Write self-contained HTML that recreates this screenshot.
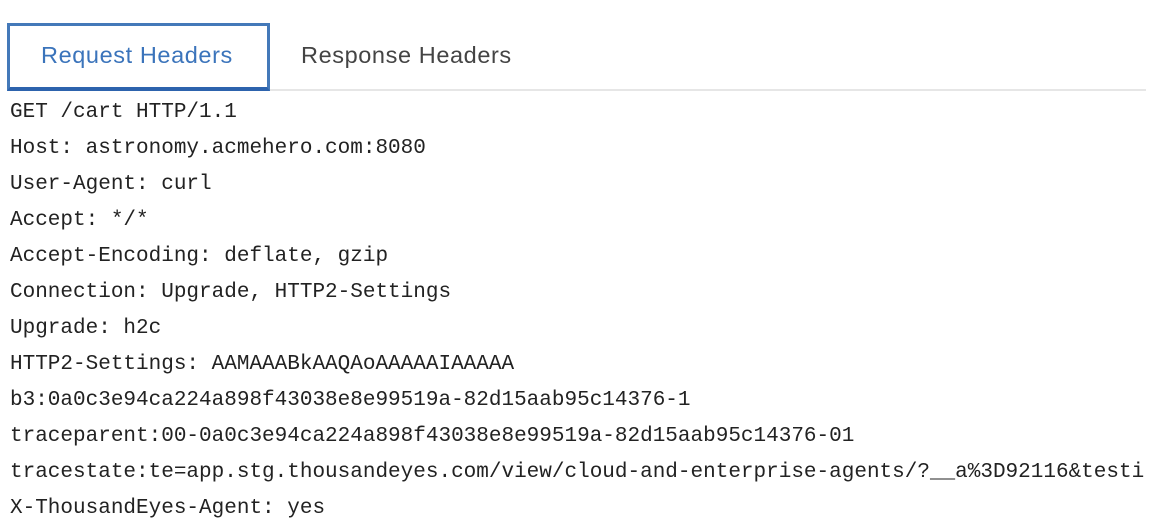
<!DOCTYPE html>
<html><head><meta charset="utf-8"><style>
body{margin:0;background:#fff;width:1168px;height:522px;overflow:hidden;position:relative;font-family:"Liberation Sans",sans-serif}
.line{position:absolute;left:10px;right:22px;top:89px;height:2px;background:#e6e6e6}
.tab{position:absolute;left:7px;top:23px;width:257px;height:61px;border:3px solid #4479b9;border-bottom:4px solid #2d63ad;background:#fff}
.t{position:absolute;top:41px;font-size:23.5px;line-height:28px;letter-spacing:0.6px}
.pre{position:absolute;left:10px;top:95px;font-family:"Liberation Mono",monospace;font-size:21px;line-height:36px;color:#222;white-space:pre;margin:0;width:1140px;overflow:hidden}
</style></head><body>
<div class="line"></div>
<div class="tab"></div>
<div class="t" style="left:41px;color:#3b74bb">Request Headers</div>
<div class="t" style="left:301px;color:#444">Response Headers</div>
<pre class="pre">GET /cart HTTP/1.1
Host: astronomy.acmehero.com:8080
User-Agent: curl
Accept: */*
Accept-Encoding: deflate, gzip
Connection: Upgrade, HTTP2-Settings
Upgrade: h2c
HTTP2-Settings: AAMAAABkAAQAoAAAAAIAAAAA
b3:0a0c3e94ca224a898f43038e8e99519a-82d15aab95c14376-1
traceparent:00-0a0c3e94ca224a898f43038e8e99519a-82d15aab95c14376-01
tracestate:te=app.stg.thousandeyes.com/view/cloud-and-enterprise-agents/?__a%3D92116&testi
X-ThousandEyes-Agent: yes</pre>
</body></html>
